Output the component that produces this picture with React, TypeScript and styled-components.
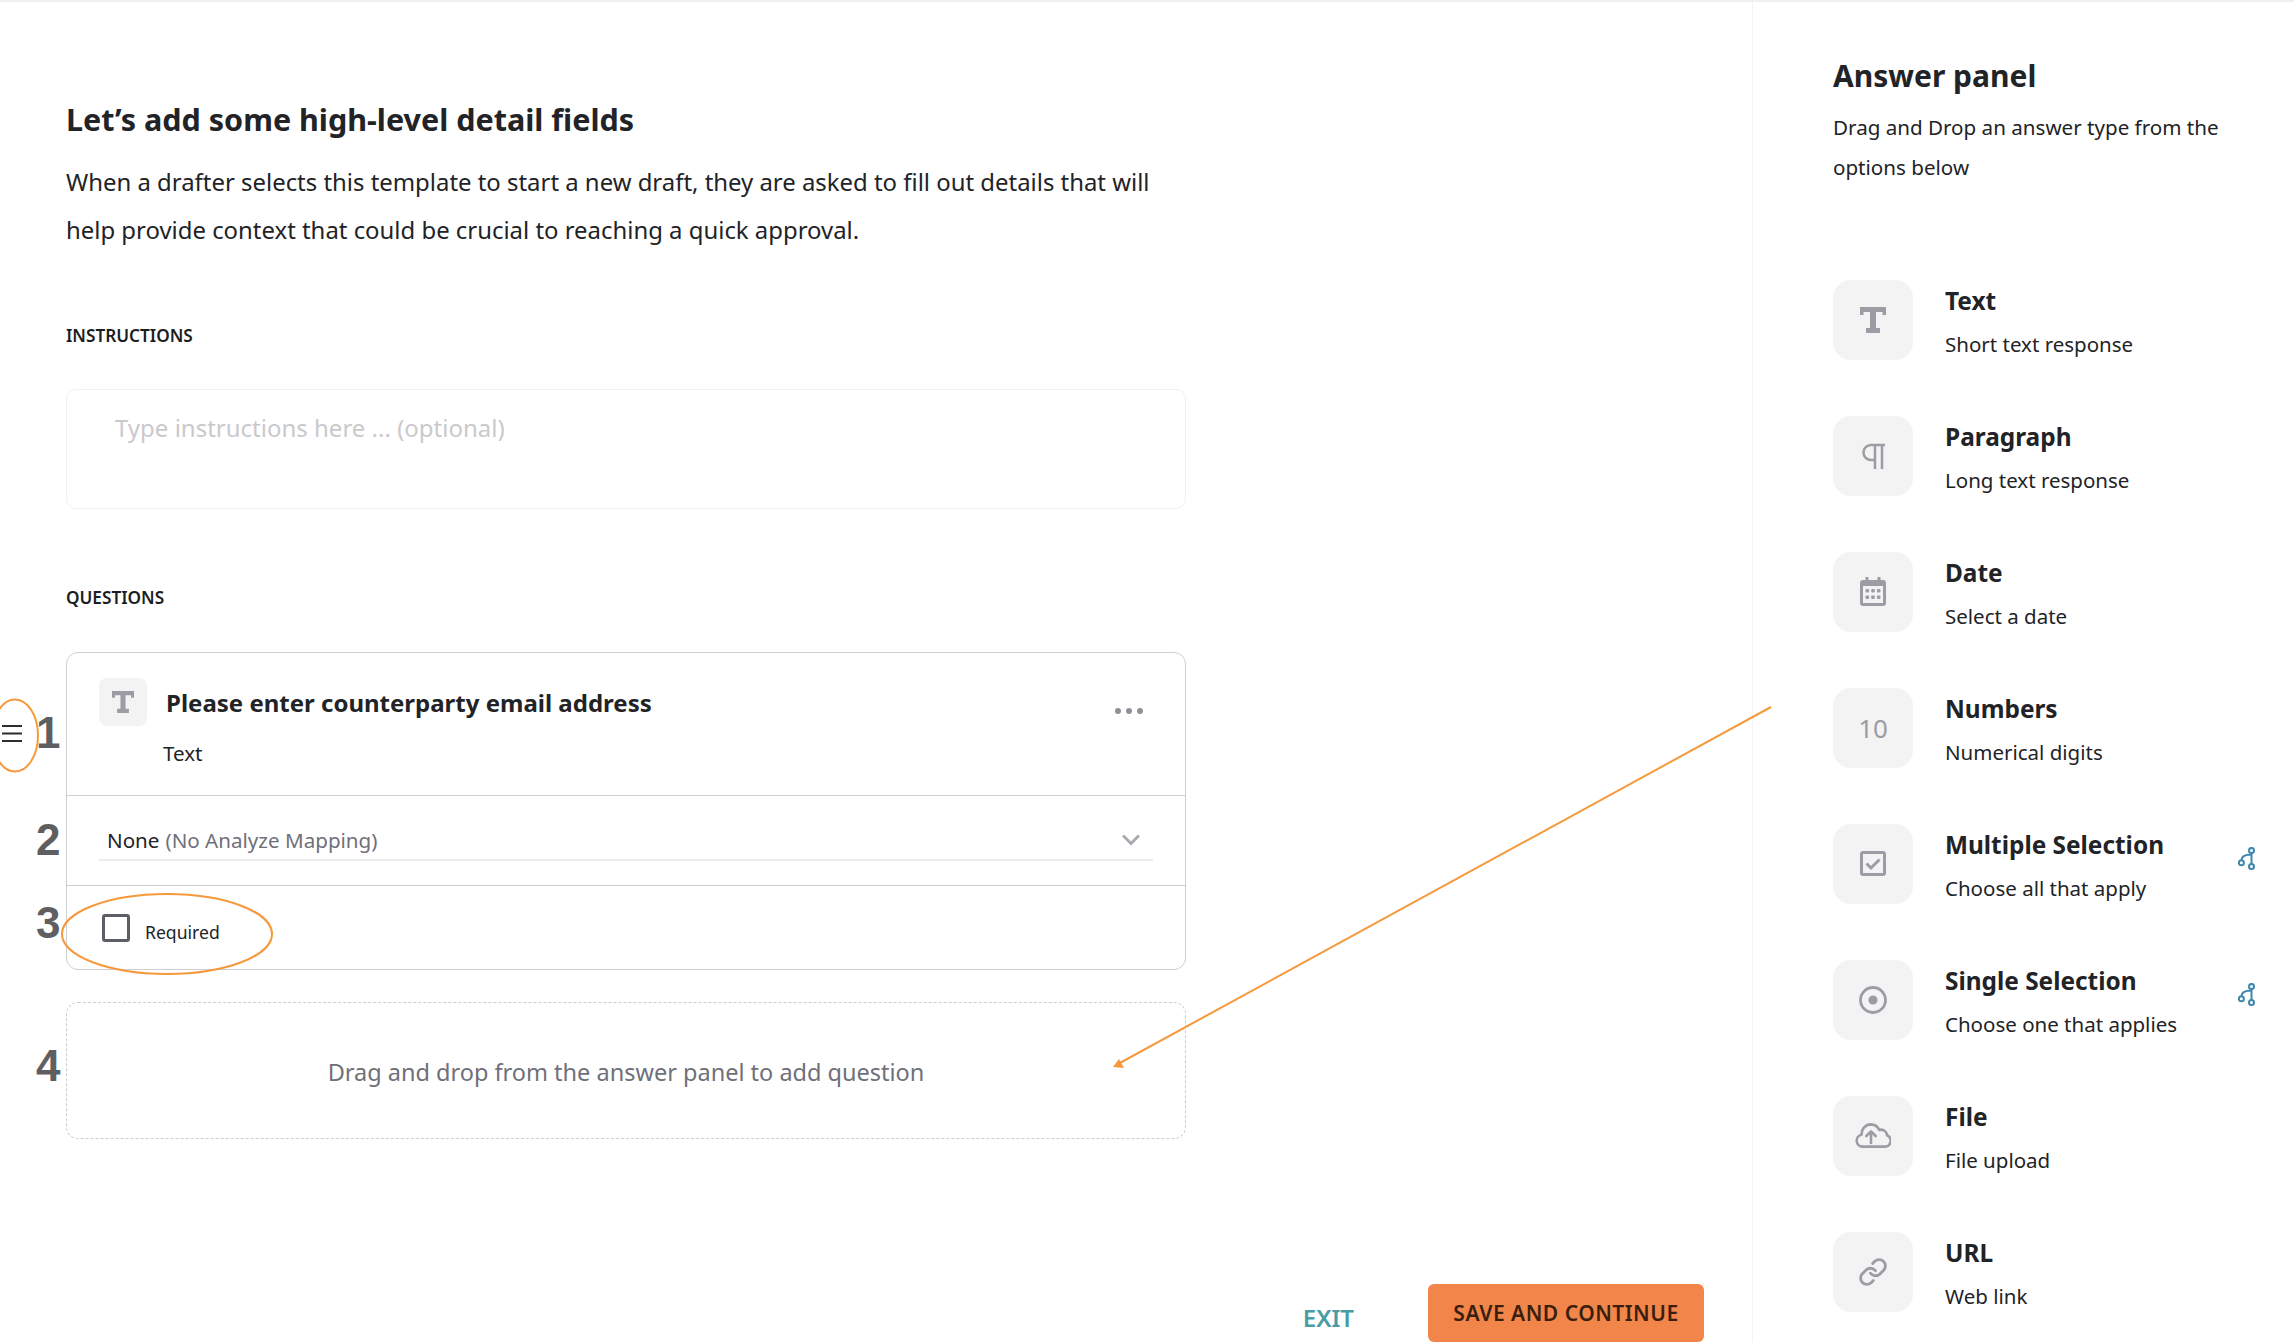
import styled, { createGlobalStyle } from "styled-components";

type AnswerType = {
  title: string;
  description: string;
  icon: React.ReactNode;
  branching?: boolean;
};

const GlobalStyle = createGlobalStyle`
  html, body {
    margin: 0;
    padding: 0;
    background: #fff;
  }
  body {
    font-family: "Noto Sans", "Open Sans", sans-serif;
    color: #222326;
  }
  * {
    box-sizing: border-box;
  }
`;

const Page = styled.div`
  position: relative;
  display: grid;
  grid-template-columns: 1752px 542px;
  width: 2294px;
  height: 1342px;
  overflow: hidden;
  border-top: 2px solid #f0f0f0;
`;

const Main = styled.main`
  display: flex;
  flex-direction: column;
  height: 1340px;
  padding: 97px 48px 0 66px;
`;

const Heading = styled.h1`
  margin: 0;
  font-size: 30.5px;
  line-height: 40px;
  font-weight: 700;
`;

const Intro = styled.p`
  margin: 19px 0 0;
  width: 1120px;
  font-size: 23.92px;
  line-height: 48px;
`;

const SectionLabel = styled.h2<{ $gap: number }>`
  margin: ${({ $gap }) => $gap}px 0 0;
  font-size: 17.2px;
  line-height: 24px;
  font-weight: 600;
  color: #1c1d20;
`;

const InstructionsBox = styled.div`
  width: 1120px;
  height: 120px;
  margin-top: 41px;
  padding: 24px 48px;
  border: 1px solid #f1f1f2;
  border-radius: 10px;
  font-size: 24px;
  line-height: 28px;
  color: #c9c9cc;
`;

const QuestionCard = styled.section`
  width: 1120px;
  margin-top: 42px;
  border: 1px solid #cfcfd2;
  border-radius: 12px;
`;

const CardHeader = styled.div`
  height: 143px;
  padding: 25px 42px 0 32px;
  border-bottom: 1px solid #cfcfd2;
`;

const CardTitleRow = styled.div`
  display: flex;
  align-items: flex-start;
`;

const SmallTile = styled.div`
  display: flex;
  align-items: center;
  justify-content: center;
  width: 48px;
  height: 48px;
  border-radius: 8px;
  background: #f3f3f4;
`;

const CardTitle = styled.div`
  margin: 9px 0 0 19px;
  font-size: 24px;
  line-height: 32px;
  font-weight: 700;
`;

const MoreDots = styled.div`
  display: flex;
  gap: 5px;
  margin: 30px 0 0 auto;

  span {
    width: 6px;
    height: 6px;
    border-radius: 50%;
    background: #8f9098;
  }
`;

const CardSubLabel = styled.div`
  margin: 13px 0 0 64px;
  font-size: 20.6px;
  line-height: 28px;
`;

const MappingSection = styled.div`
  height: 90px;
  padding: 30px 32px 0;
  border-bottom: 1px solid #cfcfd2;
`;

const MappingSelect = styled.div`
  display: flex;
  align-items: center;
  height: 35px;
  padding: 0 13px 5px 8px;
  border-bottom: 2px solid #ececee;
  font-size: 20.6px;
  line-height: 30px;
`;

const Muted = styled.span`
  margin-left: 6px;
  color: #6f7079;
`;

const SelectChevron = styled.svg`
  margin-left: auto;
`;

const RequiredSection = styled.div`
  display: flex;
  align-items: flex-start;
  height: 83px;
  padding: 28px 0 0 35px;
`;

const CheckBox = styled.div`
  width: 28px;
  height: 28px;
  border: 3px solid #5c5f66;
  border-radius: 3px;
`;

const RequiredLabel = styled.label`
  margin: 5px 0 0 15px;
  font-size: 17.6px;
  line-height: 26px;
`;

const DropZone = styled.div`
  display: flex;
  align-items: center;
  justify-content: center;
  width: 1120px;
  height: 137px;
  margin-top: 32px;
  padding-top: 3px;
  border: 1px dashed #cdcdd0;
  border-radius: 12px;
  font-size: 23.5px;
  color: #6f7079;
`;

const Footer = styled.footer`
  display: flex;
  align-items: center;
  justify-content: flex-end;
  gap: 74px;
  margin-top: auto;
`;

const ExitLink = styled.a`
  padding-top: 9px;
  font-size: 24px;
  font-weight: 600;
  color: #4a9ca6;
`;

const SaveButton = styled.button`
  width: 276px;
  height: 58px;
  padding-top: 1px;
  border: 0;
  border-radius: 6px;
  background: #f2854a;
  color: #3b1f0e;
  font-family: inherit;
  font-size: 21px;
  font-weight: 600;
  letter-spacing: 0.5px;
`;

const Panel = styled.aside`
  padding: 54px 0 0 80px;
  border-left: 1px solid #f4f4f5;
`;

const PanelTitle = styled.h2`
  margin: 0;
  font-size: 30px;
  line-height: 40px;
  font-weight: 700;
`;

const PanelHint = styled.p`
  width: 420px;
  margin: 11px 0 93px;
  font-size: 20.6px;
  line-height: 40px;
`;

const AnswerList = styled.div`
  display: flex;
  flex-direction: column;
  gap: 56px;
`;

const AnswerRow = styled.div`
  display: flex;
  align-items: flex-start;
  padding-right: 38px;
`;

const AnswerTile = styled.div`
  display: flex;
  flex: none;
  align-items: center;
  justify-content: center;
  width: 80px;
  height: 80px;
  padding-bottom: 1px;
  border-radius: 18px;
  background: #f3f3f4;
  color: #9c9da4;
  font-size: 26px;
`;

const AnswerText = styled.div`
  margin: 6px 0 0 32px;
`;

const AnswerTitle = styled.div`
  font-size: 24.4px;
  line-height: 30px;
  font-weight: 700;
`;

const AnswerDescription = styled.div`
  margin-top: 14px;
  font-size: 20.5px;
  line-height: 28px;
`;

const BranchMark = styled.svg`
  margin: 23px 0 0 auto;
`;

const StepNumber = styled.div<{ $top: number }>`
  position: absolute;
  top: ${({ $top }) => $top}px;
  left: 36px;
  font-family: "Liberation Sans", Arial, sans-serif;
  font-size: 44px;
  line-height: 50px;
  font-weight: 700;
  color: #5f5f62;
`;

const DragHandle = styled.svg`
  position: absolute;
  top: 722px;
  left: 2px;
`;

const Annotations = styled.svg`
  position: absolute;
  top: -2px;
  left: 0;
  pointer-events: none;
`;

const TextIcon = ({ size }: { size: number }) => (
  <svg width={size} height={size} viewBox="0 0 26 26" fill="#9c9da4">
    <path d="M0 0h26v8h-3.5V5H16v16h4v5H6v-5h4V5H3.5v3H0z" />
  </svg>
);

const ParagraphIcon = () => (
  <svg width="23" height="26" viewBox="0 0 23 26" fill="none" stroke="#9c9da4" strokeWidth="2.5">
    <path d="M23 2H9a7.5 7.5 0 0 0 0 15h4" />
    <path d="M13 2v24M20 2v24" />
  </svg>
);

const CalendarIcon = () => (
  <svg width="26" height="29" viewBox="0 0 26 29" fill="#9c9da4">
    <path d="M5.5 0h3v3h9V0h3v3H23a3 3 0 0 1 3 3v20a3 3 0 0 1-3 3H3a3 3 0 0 1-3-3V6a3 3 0 0 1 3-3h2.5zM3 9v17h20V9z" />
    <rect x="5.5" y="12" width="3.6" height="3.6" rx="1" />
    <rect x="11.2" y="12" width="3.6" height="3.6" rx="1" />
    <rect x="16.9" y="12" width="3.6" height="3.6" rx="1" />
    <rect x="5.5" y="18.5" width="3.6" height="3.6" rx="1" />
    <rect x="11.2" y="18.5" width="3.6" height="3.6" rx="1" />
    <rect x="16.9" y="18.5" width="3.6" height="3.6" rx="1" />
  </svg>
);

const CheckIcon = () => (
  <svg width="26" height="25" viewBox="0 0 26 25" fill="none" stroke="#9c9da4" strokeWidth="3">
    <rect x="1.5" y="1.5" width="23" height="22" rx="1.5" />
    <path d="M6.5 12.5l4.5 4.5 8.5-8.5" />
  </svg>
);

const RadioIcon = () => (
  <svg width="28" height="28" viewBox="0 0 28 28">
    <circle cx="14" cy="14" r="12.5" fill="none" stroke="#9c9da4" strokeWidth="2.8" />
    <circle cx="14" cy="14" r="4.6" fill="#9c9da4" />
  </svg>
);

const CloudIcon = () => (
  <svg width="36" height="25" viewBox="0 0 36 25" fill="none" stroke="#9c9da4" strokeWidth="2.6" strokeLinecap="round" strokeLinejoin="round">
    <path d="M11 23.6H7.5A6 6 0 0 1 6.6 11.7 9.6 9.6 0 0 1 15.6 1.4c3.9 0 7.1 2.2 8.6 5.5 .6-.2 1.2-.3 1.9-.3a6.3 6.3 0 0 1 6 5.7 5.9 5.9 0 0 1-2.4 11.3H11z" />
    <path d="M16 20V8.5M11.3 13l4.7-4.7 4.7 4.7" />
  </svg>
);

const LinkIcon = () => (
  <svg width="30" height="30" viewBox="0 0 24 24" fill="none" stroke="#9c9da4" strokeWidth="2.3" strokeLinecap="round" strokeLinejoin="round">
    <path d="M10 13a5 5 0 0 0 7.54.54l3-3a5 5 0 0 0-7.07-7.07l-1.72 1.71" />
    <path d="M14 11a5 5 0 0 0-7.54-.54l-3 3a5 5 0 0 0 7.07 7.07l1.71-1.71" />
  </svg>
);

const BranchIcon = () => (
  <BranchMark width="18" height="23" viewBox="0 0 18 23" fill="none" stroke="#3c87ab" strokeWidth="2">
    <circle cx="13.5" cy="3.4" r="2.5" />
    <circle cx="13.5" cy="19.4" r="2.5" />
    <circle cx="3.4" cy="15.8" r="2.5" />
    <path d="M13.5 6v11M3.4 13.3c0-3.3 3-5.7 10.1-5.7" />
  </BranchMark>
);

const answerTypes: AnswerType[] = [
  { title: "Text", description: "Short text response", icon: <TextIcon size={26} /> },
  { title: "Paragraph", description: "Long text response", icon: <ParagraphIcon /> },
  { title: "Date", description: "Select a date", icon: <CalendarIcon /> },
  { title: "Numbers", description: "Numerical digits", icon: "10" },
  { title: "Multiple Selection", description: "Choose all that apply", icon: <CheckIcon />, branching: true },
  { title: "Single Selection", description: "Choose one that applies", icon: <RadioIcon />, branching: true },
  { title: "File", description: "File upload", icon: <CloudIcon /> },
  { title: "URL", description: "Web link", icon: <LinkIcon /> },
];

const steps = [
  { label: "1", top: 706 },
  { label: "2", top: 813 },
  { label: "3", top: 896 },
  { label: "4", top: 1039 },
];

const App = () => (
  <>
    <GlobalStyle />
    <Page>
      <Main>
        <Heading>Let’s add some high-level detail fields</Heading>
        <Intro>
          When a drafter selects this template to start a new draft, they are
          asked to fill out details that will help provide context that could be
          crucial to reaching a quick approval.
        </Intro>
        <SectionLabel $gap={70}>INSTRUCTIONS</SectionLabel>
        <InstructionsBox>Type instructions here ... (optional)</InstructionsBox>
        <SectionLabel $gap={77}>QUESTIONS</SectionLabel>
        <QuestionCard>
          <CardHeader>
            <CardTitleRow>
              <SmallTile>
                <TextIcon size={22} />
              </SmallTile>
              <CardTitle>Please enter counterparty email address</CardTitle>
              <MoreDots>
                <span />
                <span />
                <span />
              </MoreDots>
            </CardTitleRow>
            <CardSubLabel>Text</CardSubLabel>
          </CardHeader>
          <MappingSection>
            <MappingSelect>
              None <Muted>(No Analyze Mapping)</Muted>
              <SelectChevron width="18" height="12" viewBox="0 0 18 12" fill="none" stroke="#a9aab1" strokeWidth="3">
                <path d="M1 1.5l8 8 8-8" />
              </SelectChevron>
            </MappingSelect>
          </MappingSection>
          <RequiredSection>
            <CheckBox />
            <RequiredLabel>Required</RequiredLabel>
          </RequiredSection>
        </QuestionCard>
        <DropZone>Drag and drop from the answer panel to add question</DropZone>
        <Footer>
          <ExitLink>EXIT</ExitLink>
          <SaveButton>SAVE AND CONTINUE</SaveButton>
        </Footer>
      </Main>
      <Panel>
        <PanelTitle>Answer panel</PanelTitle>
        <PanelHint>Drag and Drop an answer type from the options below</PanelHint>
        <AnswerList>
          {answerTypes.map((answer) => (
            <AnswerRow key={answer.title}>
              <AnswerTile>{answer.icon}</AnswerTile>
              <AnswerText>
                <AnswerTitle>{answer.title}</AnswerTitle>
                <AnswerDescription>{answer.description}</AnswerDescription>
              </AnswerText>
              {answer.branching && <BranchIcon />}
            </AnswerRow>
          ))}
        </AnswerList>
      </Panel>
      {steps.map((step) => (
        <StepNumber key={step.label} $top={step.top}>
          {step.label}
        </StepNumber>
      ))}
      <DragHandle width="20" height="18" viewBox="0 0 20 18" stroke="#2b2c30" strokeWidth="2">
        <path d="M0 2h20M0 9.5h20M0 17h20" />
      </DragHandle>
      <Annotations width="2294" height="1342" viewBox="0 0 2294 1342" fill="none" stroke="#f5993c" strokeWidth="2">
        <ellipse cx="15" cy="735.5" rx="23" ry="36" />
        <ellipse cx="167" cy="934" rx="105" ry="40" />
        <path d="M1771 707L1118 1064" />
        <path d="M1113 1067l11 1-5-9z" fill="#f5993c" stroke="none" />
      </Annotations>
    </Page>
  </>
);

export default App;
